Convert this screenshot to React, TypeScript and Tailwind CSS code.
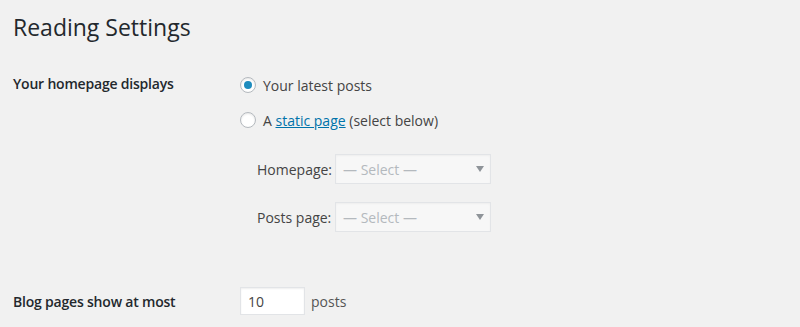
import React from "react";

function Radio({ checked }: { checked?: boolean }) {
  return (
    <span className="flex h-4 w-4 shrink-0 items-center justify-center rounded-full border border-[#b4b9be] bg-white shadow-[inset_0_1px_2px_rgba(0,0,0,0.1)]">
      {checked && <span className="h-2 w-2 rounded-full bg-[#1e8cbe]" />}
    </span>
  );
}

function SelectBox() {
  return (
    <div className="flex h-[30px] w-[156px] items-center justify-between border border-[#e2e4e7] bg-[#f7f7f7] pl-[7px] pr-[6px] text-[14px] text-[#b4b9be] shadow-[inset_0_1px_2px_rgba(0,0,0,0.04)]">
      <span>— Select —</span>
      <svg width="8" height="6" viewBox="0 0 8 6">
        <path d="M0 0 L8 0 L4 6 Z" fill="#8f9499" />
      </svg>
    </div>
  );
}

export default function App() {
  return (
    <div
      className="min-h-[327px] w-[800px] bg-[#f1f1f1] pl-[13px] pt-[12px] text-[#23282d]"
      style={{ fontFamily: '"Open Sans", "Noto Sans", sans-serif' }}
    >
      <h1 className="text-[23px] font-normal leading-[30px] text-[#23282d]">Reading Settings</h1>
      <div className="mt-[32px] flex">
        <div className="w-[227px] whitespace-nowrap text-[14px] font-semibold leading-[20px] tracking-[-0.2px]">
          Your homepage displays
        </div>
        <div className="flex flex-col text-[#444]">
          <label className="mt-[1px] flex h-[20px] items-center gap-[7px] text-[14px]">
            <Radio checked />
            <span>Your latest posts</span>
          </label>
          <label className="mt-[15px] flex h-[20px] items-center gap-[7px] text-[14px]">
            <Radio />
            <span>
              A <a className="text-[#0073aa] underline">static page</a> (select below)
            </span>
          </label>
          <div className="mt-[24px] flex flex-col gap-[18px] pl-[17px]">
            <div className="flex items-center gap-[5px] whitespace-nowrap text-[14px]">
              <span className="w-[73px]">Homepage:</span>
              <SelectBox />
            </div>
            <div className="flex items-center gap-[5px] whitespace-nowrap text-[14px]">
              <span className="w-[73px]">Posts page:</span>
              <SelectBox />
            </div>
          </div>
        </div>
      </div>
      <div className="mt-[55px] flex items-center">
        <div className="w-[227px] whitespace-nowrap text-[14px] font-semibold tracking-[-0.2px]">
          Blog pages show at most
        </div>
        <div className="flex h-[28px] w-[65px] items-center border border-[#e2e4e7] bg-white pl-[7px] text-[14px] text-[#444] shadow-[inset_0_1px_2px_rgba(0,0,0,0.07)]">
          10
        </div>
        <span className="ml-[6px] text-[14px] text-[#555]">posts</span>
      </div>
    </div>
  );
}
